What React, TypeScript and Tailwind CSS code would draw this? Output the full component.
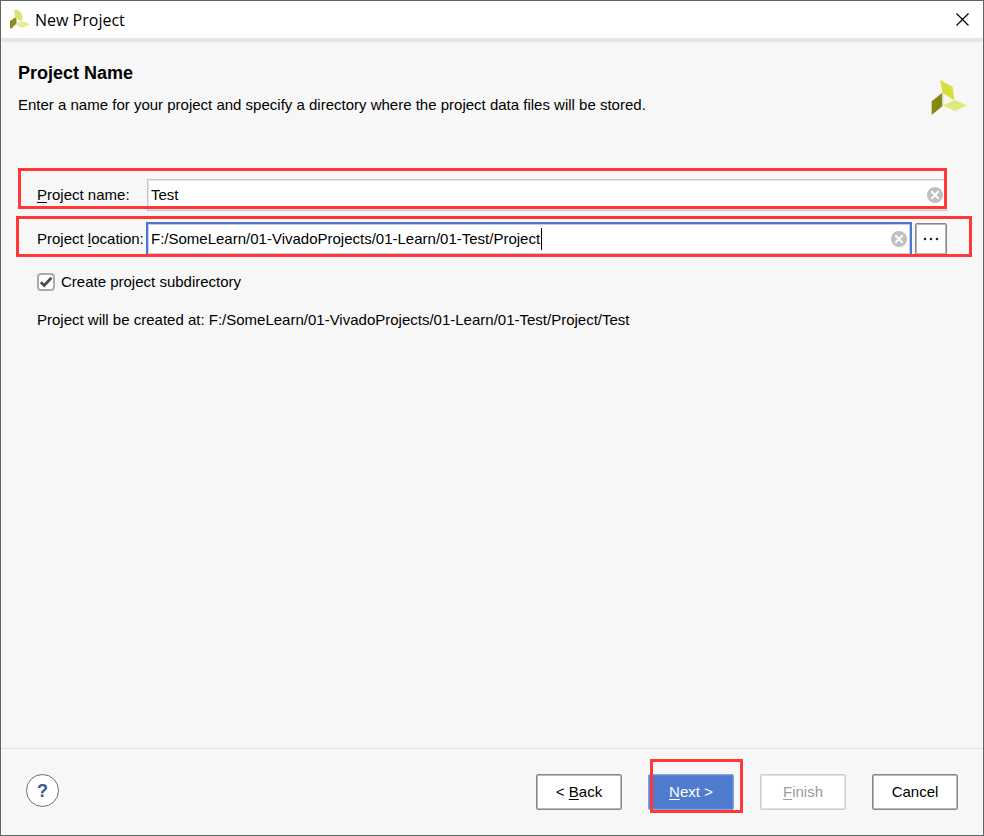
import { useState } from "react";
import type { ReactNode } from "react";

// New Project wizard, step "Project Name". Red frames mark the controls
// that the walkthrough text refers to.

const BUTTON = "h-9 w-[86px] rounded-xs border text-[15px] leading-5 inset-ring";
const BUTTON_NORMAL = "border-[#868686] bg-white inset-ring-[#b8b8b8]";
const BUTTON_PRIMARY = "border-[#7ba3ea] bg-[#507ccf] text-white inset-ring-[#5a86d8]";
const BUTTON_DISABLED = "border-[#cccccc] bg-white text-[#9a9a9a] inset-ring-[#e2e2e2]";

function Logo({ className }: { className: string }) {
  return (
    <svg viewBox="0 0 108 105" className={className} aria-hidden="true">
      <path d="M27 0 65 20 70 61 35 39Z" fill="#d5df3a" />
      <path d="M2 64 34 38V79L2 105Z" fill="#848a0b" />
      <path d="M36 40V76" stroke="#d9d9d9" strokeWidth="3" />
      <path d="M35 76 72 60 108 76 72 94Z" fill="#e2e97b" />
    </svg>
  );
}

// Title bar variant: the blades are wider so that they hold up at 20px
function SmallLogo() {
  return (
    <svg viewBox="0 0 20 20" className="size-5" aria-hidden="true">
      <path d="M5 0 9 0 12.5 3.5 13.5 10 11 11 6 7Z" fill="#dbe169" />
      <path d="M1 11 6 7.5 7.5 8.5V13.5L2.5 18.5H1Z" fill="#8a8f1c" />
      <path d="M6.5 14 12.5 11 20 13V15L14 17.5 10 17Z" fill="#e6eba0" />
    </svg>
  );
}

function Mnemonic({ children }: { children: ReactNode }) {
  return <span className="underline decoration-1 underline-offset-2">{children}</span>;
}

function ClearButton({ label, onClick }: { label: string; onClick: () => void }) {
  return (
    <button type="button" aria-label={label} onClick={onClick} className="shrink-0">
      <svg viewBox="0 0 16 16" className="size-4">
        <circle cx="8" cy="8" r="8" fill="#c0c0c0" />
        <path d="M4.3 4.3 11.7 11.7M11.7 4.3 4.3 11.7" stroke="#fff" strokeWidth="2" />
      </svg>
    </button>
  );
}

function Highlight({ className }: { className: string }) {
  return (
    <div
      aria-hidden="true"
      className={`pointer-events-none absolute border-3 border-[#ff3737] ${className}`}
    />
  );
}

export default function App() {
  const [name, setName] = useState("Test");
  const [location, setLocation] = useState("F:/SomeLearn/01-VivadoProjects/01-Learn/01-Test/Project");
  const [subdirectory, setSubdirectory] = useState(true);

  return (
    <div className="flex min-h-screen flex-col border border-[#5f6466] bg-[#f7f7f7] font-['Liberation_Sans',Arial,sans-serif] text-[15px] leading-5 text-black">
      <header className="flex h-[41px] items-center border-b-4 border-[#e6e6e6] bg-white pr-2.5 pl-2">
        <SmallLogo />
        <h1 className="ml-1.5 flex-1 font-['Open_Sans','Noto_Sans',sans-serif] text-base">New Project</h1>
        <button type="button" aria-label="Close" className="p-1">
          <svg viewBox="0 0 13 13" className="size-[13px]">
            <path d="M.5.5 12.5 12.5M12.5.5.5 12.5" stroke="#000" strokeWidth="1.2" />
          </svg>
        </button>
      </header>

      <main className="flex-1">
        <div className="flex items-start justify-between pt-[19px] pr-4 pl-[17px]">
          <div>
            <h2 className="text-lg leading-6 font-bold">Project Name</h2>
            <p className="mt-2.5">
              Enter a name for your project and specify a directory where the project data files will be stored.
            </p>
          </div>
          <Logo className="mt-[19px] h-[35px] w-9 shrink-0" />
        </div>

        <div className="flex flex-col px-9 pt-16">
          <div className="relative flex items-center">
            <label htmlFor="project-name" className="w-[110px] shrink-0">
              <Mnemonic>P</Mnemonic>roject name:
            </label>
            <div className="flex h-8 flex-1 items-center border border-[#c6c6c6] bg-white px-[3px] inset-ring inset-ring-[#e4e4e4]">
              <input
                id="project-name"
                value={name}
                onChange={(e) => setName(e.target.value)}
                className="min-w-0 flex-1 outline-none"
              />
              <ClearButton label="Clear project name" onClick={() => setName("")} />
            </div>
            <Highlight className="-top-[11px] right-0 bottom-0.5 -left-[19px]" />
          </div>

          <div className="relative mt-[11px] flex items-center">
            <label htmlFor="project-location" className="w-[109px] shrink-0">
              Project <Mnemonic>l</Mnemonic>ocation:
            </label>
            <div className="relative flex h-[34px] flex-1 items-center border-2 border-[#4a78cf] bg-white px-[3px] inset-ring inset-ring-[#bdd0f2]">
              <input
                id="project-location"
                value={location}
                onChange={(e) => setLocation(e.target.value)}
                className="min-w-0 flex-1 outline-none"
              />
              <ClearButton label="Clear project location" onClick={() => setLocation("")} />
              <span aria-hidden="true" className="absolute left-[393px] h-[22px] w-px bg-black" />
            </div>
            <button
              type="button"
              aria-label="Browse"
              className="ml-[3px] flex h-8 w-8 items-center justify-center rounded-xs border border-[#868686] bg-white inset-ring inset-ring-[#b8b8b8]"
            >
              <svg viewBox="0 0 16 4" className="h-1 w-4" fill="#222">
                <circle cx="2" cy="2" r="1.3" />
                <circle cx="8" cy="2" r="1.3" />
                <circle cx="14" cy="2" r="1.3" />
              </svg>
            </button>
            <Highlight className="-top-1.5 -right-[25px] -bottom-px -left-[21px]" />
          </div>

          <label className="relative mt-4 flex items-center gap-1.5">
            <input
              type="checkbox"
              checked={subdirectory}
              onChange={(e) => setSubdirectory(e.target.checked)}
              className="peer size-[18px] appearance-none rounded-sm border-2 border-[#ababab] bg-white"
            />
            <svg
              viewBox="0 0 18 18"
              className="pointer-events-none absolute left-0 hidden size-[18px] peer-checked:block"
              fill="none"
            >
              <path d="M3.8 9.2 7.2 12.5 14.4 4.8" stroke="#4d4d4d" strokeWidth="2.8" />
            </svg>
            Create project subdirectory
          </label>

          <p className="mt-[18px]">Project will be created at: F:/SomeLearn/01-VivadoProjects/01-Learn/01-Test/Project/Test</p>
        </div>
      </main>

      <footer className="flex items-start justify-between border-t border-[#e2e2e2] p-[25px]">
        <button
          type="button"
          aria-label="Help"
          className="size-[33px] rounded-full border border-[#6e6e6e] bg-white text-lg font-bold text-[#3b5590]"
        >
          ?
        </button>
        <div className="flex gap-[26px]">
          <button type="button" className={`${BUTTON} ${BUTTON_NORMAL}`}>
            &lt; <Mnemonic>B</Mnemonic>ack
          </button>
          <div className="relative">
            <button type="button" className={`${BUTTON} ${BUTTON_PRIMARY}`}>
              <Mnemonic>N</Mnemonic>ext &gt;
            </button>
            <Highlight className="-top-[15px] -right-[9px] -bottom-[3px] left-0.5" />
          </div>
          <button type="button" disabled className={`${BUTTON} ${BUTTON_DISABLED}`}>
            <Mnemonic>F</Mnemonic>inish
          </button>
          <button type="button" className={`${BUTTON} ${BUTTON_NORMAL}`}>
            Cancel
          </button>
        </div>
      </footer>
    </div>
  );
}
